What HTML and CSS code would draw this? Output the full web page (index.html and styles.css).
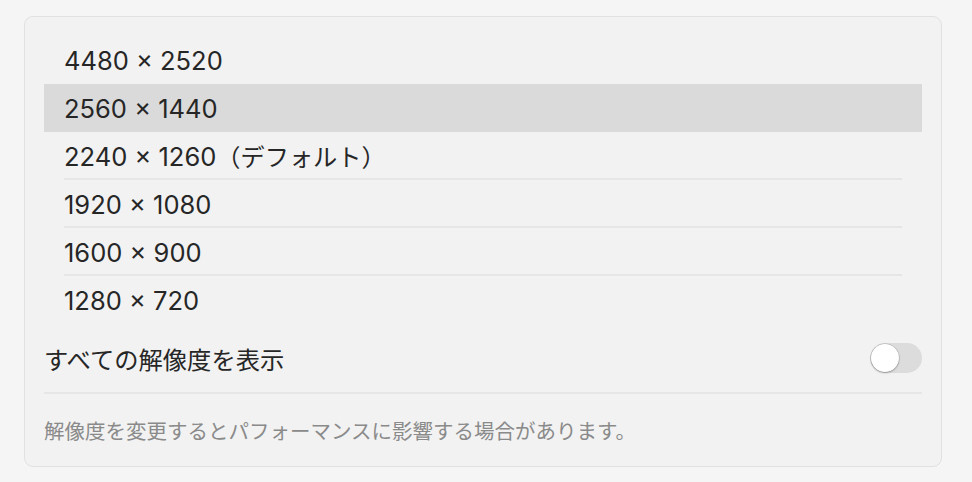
FILE: index.html
```html
<!DOCTYPE html>
<html lang="ja">
<head>
<meta charset="utf-8">
<link rel="stylesheet" href="styles.css">
</head>
<body>
<div class="card">
  <ul class="list">
    <li class="row">4480 × 2520</li>
    <li class="row selected">2560 × 1440</li>
    <li class="row sep">2240 × 1260<span class="ja">（デフォルト）</span></li>
    <li class="row sep">1920 × 1080</li>
    <li class="row sep">1600 × 900</li>
    <li class="row">1280 × 720</li>
  </ul>
  <div class="option">
    <span class="label">すべての解像度を表示</span>
    <span class="toggle"><span class="knob"></span></span>
  </div>
  <p class="note">解像度を変更するとパフォーマンスに影響する場合があります。</p>
</div>
</body>
</html>
```
FILE: styles.css
```css
html, body {
  margin: 0;
  padding: 0;
  background: #f5f5f5;
}
body {
  padding: 16px 30px 16px 24px;
  font-family: "Inter", "Noto Sans CJK JP", sans-serif;
  color: #262626;
}
.card {
  background: #f2f2f2;
  border: 1px solid #e1e1e1;
  border-radius: 9px;
  padding: 19px 19px 0 19px;
  height: 451px;
  box-sizing: border-box;
}
.list {
  list-style: none;
  margin: 0;
  padding: 0;
}
.row {
  height: 48px;
  box-sizing: border-box;
  padding: 1px 20px 0;
  font-size: 25.5px;
  line-height: 48px;
  position: relative;
}
.row .ja {
  font-size: 24.2px;
}
.row.selected {
  background: #dadada;
}
.row.sep::after {
  content: "";
  position: absolute;
  left: 20px;
  right: 20px;
  bottom: 0;
  height: 2px;
  background: #e6e6e6;
}
.option {
  height: 70px;
  display: flex;
  align-items: center;
  justify-content: space-between;
  border-bottom: 2px solid #e6e6e6;
  box-sizing: border-box;
}
.label {
  font-size: 24.3px;
}
.toggle {
  width: 52px;
  height: 30px;
  border-radius: 15px;
  background: #dcdcdc;
  position: relative;
  display: block;
}
.knob {
  position: absolute;
  left: 1px;
  top: 1px;
  width: 28px;
  height: 28px;
  border-radius: 50%;
  background: #fff;
  box-shadow: 0 0 0 0.5px rgba(0,0,0,0.2), 0 1px 2px rgba(0,0,0,0.25);
}
.note {
  margin: 0;
  padding-top: 24px;
  font-size: 20.5px;
  color: #8a8a8a;
  line-height: 28px;
}
```
